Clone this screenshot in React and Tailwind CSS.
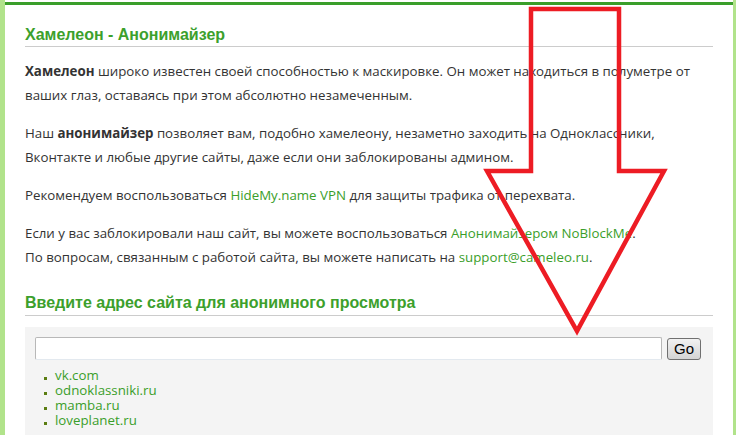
import React from 'react';

const links = ['vk.com', 'odnoklassniki.ru', 'mamba.ru', 'loveplanet.ru'];

function Arrow() {
  // красная стрелка поверх страницы
  return (
    <svg className="absolute left-0 top-0 pointer-events-none" width="736" height="435" viewBox="0 0 736 435">
      <polygon
        points="531,9 619,9 619,171 664,171 577,331 487,171 531,171"
        fill="none"
        stroke="#ed1c24"
        strokeWidth="4.5"
        strokeLinejoin="miter"
      />
    </svg>
  );
}

export default function App() {
  const body = { fontFamily: '"Open Sans", "DejaVu Sans", sans-serif' };
  const head = { fontFamily: '"Liberation Sans", Arial, sans-serif' };

  return (
    <div className="relative flex h-[435px] w-[736px] overflow-hidden bg-white">
      <div className="w-[5px] shrink-0 bg-[#b1e38b]" />
      <main className="mt-[2px] flex-1 border-t-[3px] border-[#3a9e2a] bg-white pl-[20px] pr-[20px]" style={body}>
        <h1
          className="mt-[20px] border-b border-[#cccccc] pb-[1px] text-[16px] font-bold leading-[20px] text-[#3ca02c]"
          style={head}
        >
          Хамелеон - Анонимайзер
        </h1>

        <div className="text-[13.3px] leading-[24px] text-[#333333]">
          <p className="mt-[12px]">
            <b>Хамелеон</b> широко известен своей способностью к маскировке. Он может находиться в полуметре от ваших
            глаз, оставаясь при этом абсолютно незамеченным.
          </p>
          <p className="mt-[14px]">
            Наш <b>анонимайзер</b> позволяет вам, подобно хамелеону, незаметно заходить на Одноклассники, Вконтакте и
            любые другие сайты, даже если они заблокированы админом.
          </p>
          <p className="mt-[14px]">
            Рекомендуем воспользоваться <a className="text-[#3a9e2a]">HideMy.name VPN</a> для защиты трафика от
            перехвата.
          </p>
          <p className="mt-[14px]">
            Если у вас заблокировали наш сайт, вы можете воспользоваться{' '}
            <a className="text-[#3a9e2a]">Анонимайзером NoBlockMe</a>.
            <br />
            По вопросам, связанным с работой сайта, вы можете написать на{' '}
            <a className="text-[#3a9e2a]">support@cameleo.ru</a>.
          </p>
        </div>

        <h2
          className="mt-[24px] border-b border-[#cccccc] pb-[2px] text-[16px] font-bold leading-[20px] text-[#3ca02c]"
          style={head}
        >
          Введите адрес сайта для анонимного просмотра
        </h2>

        <div className="mt-[11px] h-[120px] bg-[#f4f4f4] pl-[10px] pt-[10px]">
          <div className="flex items-start gap-[5px]">
            <input
              type="text"
              className="h-[23px] w-[627px] rounded-[2px] border border-[#b8b8b8] border-b-[#e3e9ef] bg-white"
            />
            <button
              className="mt-[1px] h-[22px] w-[34px] rounded-[3px] border border-[#707070] bg-gradient-to-b from-[#f2f2f2] to-[#d4d4d4] text-[15px] leading-[18px] text-black"
              style={head}
            >
              Go
            </button>
          </div>
          <ul className="mt-[8px] pl-[9px] text-[13.3px] leading-[15px]">
            {links.map((l) => (
              <li key={l} className="flex items-center">
                <span className="mr-[8px] mt-[5px] h-[3px] w-[3px] bg-[#5a7d12]" />
                <a className="font-medium text-[#3a9e2a]">{l}</a>
              </li>
            ))}
          </ul>
        </div>
      </main>
      <div className="w-[3px] shrink-0 bg-[#b1e38b]" />
      <Arrow />
    </div>
  );
}
